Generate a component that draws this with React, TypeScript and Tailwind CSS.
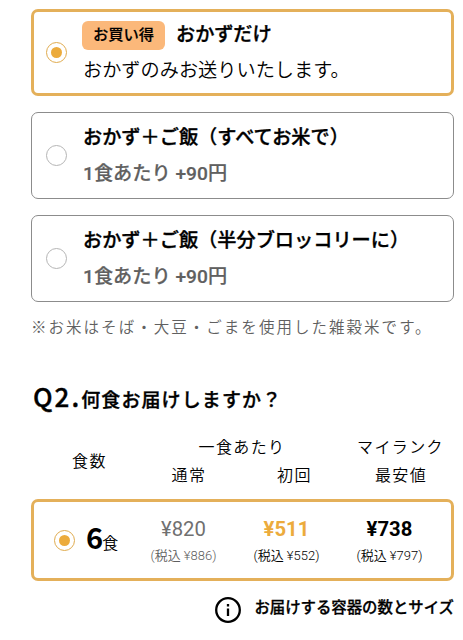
import React, { useState } from 'react';
import clsx from 'clsx';

type SideOption = {
  id: string;
  title: string;
  detail: string;
  badge?: string;
};

type Price = {
  label: string;
  amount: string;
  withTax: string;
  amountClass: string;
  taxClass: string;
};

const sideOptions: SideOption[] = [
  { id: 'okazu', badge: 'お買い得', title: 'おかずだけ', detail: 'おかずのみお送りいたします。' },
  { id: 'rice', title: 'おかず＋ご飯（すべてお米で）', detail: '1食あたり +90円' },
  { id: 'broccoli', title: 'おかず＋ご飯（半分ブロッコリーに）', detail: '1食あたり +90円' },
];

const prices: Price[] = [
  {
    label: '通常',
    amount: '¥820',
    withTax: '(税込 ¥886)',
    amountClass: 'text-[#707070]',
    taxClass: 'text-[#606060]',
  },
  {
    label: '初回',
    amount: '¥511',
    withTax: '(税込 ¥552)',
    amountClass: 'font-bold text-[#ecab3c]',
    taxClass: 'text-black',
  },
  {
    label: '最安値',
    amount: '¥738',
    withTax: '(税込 ¥797)',
    amountClass: 'font-bold text-black',
    taxClass: 'text-black',
  },
];

function Radio({ checked }: { checked: boolean }) {
  return (
    <span
      className={clsx(
        'flex size-[21px] shrink-0 items-center justify-center rounded-full border',
        checked ? 'border-[#e0ab4e]' : 'border-[#b5b5b5]'
      )}
    >
      {checked && <span className="size-[11px] rounded-full bg-[#ecab3c]" />}
    </span>
  );
}

export default function App() {
  const [selected, setSelected] = useState('okazu');

  return (
    <main className="h-[640px] w-[463px] overflow-hidden bg-white pt-[9px] pr-[9px] pl-[31px] font-['Roboto','Noto_Sans_CJK_JP',sans-serif] text-black">
      <div className="flex flex-col gap-4">
        {sideOptions.map((option) => {
          const checked = selected === option.id;
          return (
            <button
              key={option.id}
              type="button"
              onClick={() => setSelected(option.id)}
              className={clsx(
                'flex h-[87px] items-center rounded-[7px] text-left',
                checked ? 'border-3 border-[#e4b05a] pl-3' : 'border border-[#8c8c8c] pl-[14px]'
              )}
            >
              <Radio checked={checked} />
              <span className="ml-4 flex flex-col whitespace-nowrap">
                <span className="flex h-[38px] items-center text-[19.2px] font-medium [-webkit-text-stroke:0.35px]">
                  {option.badge && (
                    <span className="mr-[11px] -ml-px flex h-[29px] w-[83px] items-center justify-center rounded-[6px] bg-[#fbb87a] text-[15.3px] [-webkit-text-stroke:0.2px]">
                      {option.badge}
                    </span>
                  )}
                  {option.title}
                </span>
                <span
                  className={clsx(
                    'flex h-[35px] items-center text-[19.2px]',
                    option.badge ? 'font-[350]' : 'font-medium text-[#606060] [-webkit-text-stroke:0.2px]'
                  )}
                >
                  {option.detail}
                </span>
              </span>
            </button>
          );
        })}
      </div>

      <p className="mt-[14px] text-[15.5px] leading-6 font-[350] tracking-[2.03px] whitespace-nowrap text-[#606060]">
        ※お米はそば・大豆・ごまを使用した雑穀米です。
      </p>

      <h2 className="mt-9 flex h-10 items-baseline font-['Noto_Sans_CJK_JP',sans-serif] text-[19px] leading-10 font-medium tracking-[1.1px] whitespace-nowrap [-webkit-text-stroke:0.35px]">
        <span className="ml-0.5 text-[26px] tracking-[2px]">Q2.</span>
        何食お届けしますか？
      </h2>

      {/* Price table header */}
      <div className="mt-[18px] grid h-14 grid-cols-[105px_105px_106px_107px] grid-rows-2 items-center text-center text-[16px] font-[350] tracking-[1.4px] whitespace-nowrap">
        <span className="row-span-2 pl-3">食数</span>
        <span className="col-span-2 pl-px">一食あたり</span>
        <span>マイランク</span>
        {prices.map((price) => (
          <span key={price.label} className="pl-px">{price.label}</span>
        ))}
      </div>

      <div className="mt-[9px] flex h-[82px] items-center rounded-[7px] border-3 border-[#e4b05a] pl-5">
        <Radio checked />
        <div className="mb-2 ml-2.5 flex w-[47px] items-baseline font-['Noto_Sans_CJK_JP',sans-serif]">
          <span className="pl-px text-[29px] leading-10 font-bold">6</span>
          <span className="-ml-px text-[16px] font-[350]">食</span>
        </div>
        {prices.map((price) => (
          <div key={price.label} className="w-[103px] shrink-0 pt-0.5 text-center whitespace-nowrap">
            <div className={clsx('text-[20.3px] leading-[28px]', price.amountClass)}>{price.amount}</div>
            <div className={clsx('text-[13px] leading-[25px] font-[350]', price.taxClass)}>{price.withTax}</div>
          </div>
        ))}
      </div>

      <div className="mt-3 flex h-8 items-center justify-end">
        <svg viewBox="0 0 26 26" className="mt-px size-[26px]" fill="none" stroke="black">
          <circle cx="13" cy="13" r="11.8" strokeWidth="2.3" />
          <path d="M13 11.5V19M13 7v2.5" strokeWidth="2.3" />
        </svg>
        <span className="ml-[13px] text-[15.4px] font-medium whitespace-nowrap [-webkit-text-stroke:0.3px]">
          お届けする容器の数とサイズ
        </span>
      </div>
    </main>
  );
}
